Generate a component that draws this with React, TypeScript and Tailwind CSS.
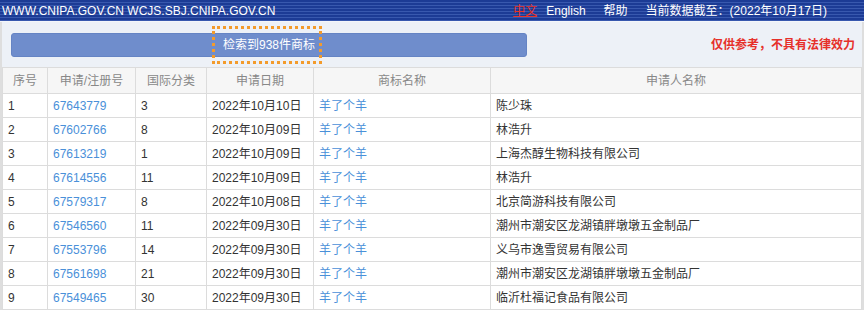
import React from "react";

type Row = { no: number; reg: string; cls: string; date: string; mark: string; owner: string };

const rows: Row[] = [
  { no: 1, reg: "67643779", cls: "3", date: "2022年10月10日", mark: "羊了个羊", owner: "陈少珠" },
  { no: 2, reg: "67602766", cls: "8", date: "2022年10月09日", mark: "羊了个羊", owner: "林浩升" },
  { no: 3, reg: "67613219", cls: "1", date: "2022年10月09日", mark: "羊了个羊", owner: "上海杰醇生物科技有限公司" },
  { no: 4, reg: "67614556", cls: "11", date: "2022年10月09日", mark: "羊了个羊", owner: "林浩升" },
  { no: 5, reg: "67579317", cls: "8", date: "2022年10月08日", mark: "羊了个羊", owner: "北京简游科技有限公司" },
  { no: 6, reg: "67546560", cls: "11", date: "2022年09月30日", mark: "羊了个羊", owner: "潮州市潮安区龙湖镇胖墩墩五金制品厂" },
  { no: 7, reg: "67553796", cls: "14", date: "2022年09月30日", mark: "羊了个羊", owner: "义乌市逸雪贸易有限公司" },
  { no: 8, reg: "67561698", cls: "21", date: "2022年09月30日", mark: "羊了个羊", owner: "潮州市潮安区龙湖镇胖墩墩五金制品厂" },
  { no: 9, reg: "67549465", cls: "30", date: "2022年09月30日", mark: "羊了个羊", owner: "临沂杜福记食品有限公司" },
];

const headers = ["序号", "申请/注册号", "国际分类", "申请日期", "商标名称", "申请人名称"];

const cell = "border-r border-b border-[#dcdcdc] flex items-center px-[5px] whitespace-nowrap";

export default function App() {
  return (
    <div className="w-[864px] h-[311px] overflow-hidden bg-white font-['Liberation_Sans','Noto_Sans_CJK_SC',sans-serif] text-[12px] text-[#333]">
      {/* 顶部条 */}
      <div className="h-[21px] flex items-center text-white text-[12px] bg-[repeating-linear-gradient(180deg,#1c3b95_0px,#1c3b95_2px,#3858ae_2px,#3858ae_3px)]">
        <span className="pl-[2px]">WWW.CNIPA.GOV.CN WCJS.SBJ.CNIPA.GOV.CN</span>
        <div className="ml-auto mr-[37px] flex items-center">
          <span className="text-[#e8342a] underline">中文</span>
          <span className="ml-[9px]">English</span>
          <span className="ml-[18px]">帮助</span>
          <span className="ml-[18px]">当前数据截至：(2022年10月17日)</span>
        </div>
      </div>
      <div className="h-px bg-[#f4f6fa]" />

      <div className="border-x-2 border-[#dedede]">
        {/* 检索结果 */}
        <div className="h-[45px] bg-[#edf1f7] flex items-center pl-[9px] pr-[7px]">
          <div className="relative w-[516px] h-[24px] rounded-[3px] bg-[#6f8dcc] border border-[#6584c4] flex items-center justify-center text-white text-[12px]">
            检索到938件商标
            <div className="absolute left-[200px] -top-[8px] w-[110px] h-[38px] border-[3px] border-dotted border-[#f39b2b]" />
          </div>
          <span className="ml-auto text-[12px] font-bold text-[#e6302a]">仅供参考，不具有法律效力</span>
        </div>

        {/* 表格 */}
        <div className="grid grid-cols-[45px_88px_71px_107px_177px_371px] border-l border-t border-[#dcdcdc]">
          {headers.map((h) => (
            <div key={h} className={`${cell} h-[26px] justify-center bg-[#f6f6f6] text-[#888]`}>
              {h}
            </div>
          ))}
          {rows.map((r) => (
            <React.Fragment key={r.no}>
              <div className={`${cell} h-[24px]`}>{r.no}</div>
              <div className={`${cell} h-[24px] text-[#4a90d9]`}>{r.reg}</div>
              <div className={`${cell} h-[24px]`}>{r.cls}</div>
              <div className={`${cell} h-[24px]`}>{r.date}</div>
              <div className={`${cell} h-[24px] text-[#4a90d9]`}>{r.mark}</div>
              <div className={`${cell} h-[24px]`}>{r.owner}</div>
            </React.Fragment>
          ))}
        </div>
      </div>
    </div>
  );
}
